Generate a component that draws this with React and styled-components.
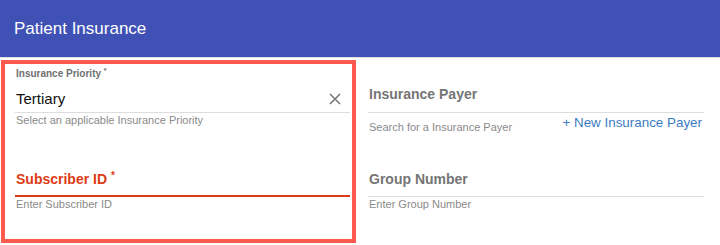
import styled, { createGlobalStyle } from "styled-components";

const GlobalStyle = createGlobalStyle`
  html, body {
    margin: 0;
    padding: 0;
    background: #fff;
    font-family: "Liberation Sans", Arial, sans-serif;
  }
`;

function ClearIcon() {
  return (
    <svg width="12" height="12" viewBox="0 0 12 12">
      <path d="M1 1 L11 11 M11 1 L1 11" stroke="#777" strokeWidth="1.6" fill="none" />
    </svg>
  );
}

export default function App() {
  return (
    <>
      <GlobalStyle />
      <Header>
        <Title>Patient Insurance</Title>
      </Header>
      <Body>
        <FocusBox>
          <SmallLabel>
            Insurance Priority <sup>*</sup>
          </SmallLabel>
          <ValueRow>
            <Value>Tertiary</Value>
            <ClearButton>
              <ClearIcon />
            </ClearButton>
          </ValueRow>
          <Helper>Select an applicable Insurance Priority</Helper>

          <FieldRow $top={42} $height={26} $error>
            <FieldLabel $error>
              Subscriber ID <sup>*</sup>
            </FieldLabel>
          </FieldRow>
          <Helper>Enter Subscriber ID</Helper>
        </FocusBox>

        <Column>
          <FieldRow $top={24} $height={28}>
            <FieldLabel>Insurance Payer</FieldLabel>
          </FieldRow>
          <HelperRow>
            <Helper $offset={5}>Search for a Insurance Payer</Helper>
            <AddLink>+ New Insurance Payer</AddLink>
          </HelperRow>

          <FieldRow $top={35} $height={27}>
            <FieldLabel>Group Number</FieldLabel>
          </FieldRow>
          <Helper>Enter Group Number</Helper>
        </Column>
      </Body>
    </>
  );
}

const Header = styled.header`
  height: 58px;
  background-color: #3f51b5;
  border-bottom: 1px solid #e2e2e2;
  display: flex;
  align-items: center;
  padding-left: 14px;
  box-sizing: border-box;
`;

const Title = styled.h1`
  margin: 0;
  color: #fff;
  font-size: 17px;
  font-weight: normal;
`;

const Body = styled.div`
  display: flex;
  align-items: flex-start;
  padding: 2px 16px 0 1px;
  gap: 12px;
`;

const FocusBox = styled.section`
  width: 355px;
  height: 183px;
  box-sizing: border-box;
  border: 4px solid #fd5a4d;
  padding: 3px 2px 0 10px;
  display: flex;
  flex-direction: column;
`;

const Column = styled.section`
  flex: 1;
  display: flex;
  flex-direction: column;
`;

const SmallLabel = styled.label`
  font-size: 10px;
  line-height: 14px;
  height: 14px;
  font-weight: bold;
  color: #6f6f6f;
  padding-left: 1px;

  sup {
    font-size: 7px;
    vertical-align: top;
    line-height: 8px;
  }
`;

const ValueRow = styled.div`
  margin-top: 8px;
  height: 23px;
  border-bottom: 1px solid #ddd;
  display: flex;
  align-items: flex-start;
  justify-content: space-between;
`;

const Value = styled.span`
  font-size: 15px;
  line-height: 20px;
  color: #111;
  padding-left: 1px;
`;

const ClearButton = styled.span`
  display: flex;
  margin: 4px 9px 0 0;
`;

const FieldRow = styled.div`
  margin-top: ${({ $top }) => $top}px;
  height: ${({ $height }) => $height}px;
  border-bottom: ${({ $error }) => ($error ? "2px solid #dd3a15" : "1px solid #ddd")};
`;

const FieldLabel = styled.span`
  display: block;
  height: 20px;
  font-size: 14px;
  line-height: 20px;
  font-weight: bold;
  color: ${({ $error }) => ($error ? "#dd3a15" : "#757575")};
  padding-left: 1px;

  sup {
    font-size: 10px;
    vertical-align: top;
    line-height: 14px;
  }
`;

const Helper = styled.div`
  font-size: 11px;
  line-height: 14px;
  color: #8a8a8a;
  margin-top: ${({ $offset }) => $offset || 0}px;
  padding-left: 1px;
`;

const HelperRow = styled.div`
  display: flex;
  justify-content: space-between;
  align-items: flex-start;
  padding-top: 2px;
`;

const AddLink = styled.a`
  font-size: 13.4px;
  line-height: 16px;
  color: #3b7cc3;
  cursor: pointer;
  padding-right: 2px;
`;
